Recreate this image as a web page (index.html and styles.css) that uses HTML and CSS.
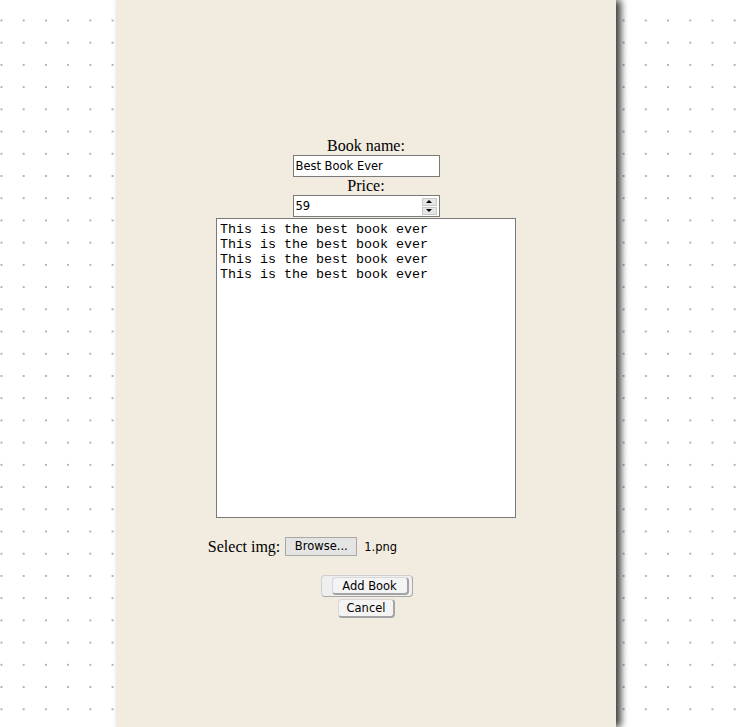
FILE: index.html
```html
<!DOCTYPE html>
<html>
<head>
<meta charset="utf-8">
<link rel="stylesheet" href="styles.css">
</head>
<body>
<div class="page">
  <form class="book-form">
    <label class="label">Book name:</label>
    <input class="field" type="text" value="Best Book Ever">
    <label class="label">Price:</label>
    <div class="field number">
      <input class="number-input" type="text" value="59">
      <div class="spinner">
        <span class="spin up"></span>
        <span class="spin down"></span>
      </div>
    </div>
    <textarea class="desc">This is the best book ever
This is the best book ever
This is the best book ever
This is the best book ever</textarea>
    <div class="file-row">
      <span class="file-label">Select img:</span>
      <span class="browse">Browse...</span>
      <span class="file-name">1.png</span>
    </div>
    <div class="actions">
      <span class="btn-frame"><span class="btn add">Add Book</span></span>
      <span class="btn cancel">Cancel</span>
    </div>
  </form>
</div>
</body>
</html>
```

FILE: styles.css
```css
html, body {
  margin: 0;
  padding: 0;
  height: 100%;
}
body {
  background-color: #ffffff;
  background-image: radial-gradient(circle at 1px 1px, #a3b6c0 0.9px, rgba(163,182,192,0) 1.4px);
  background-size: 22.22px 22.22px;
  background-position: 0.5px 19.5px;
  overflow: hidden;
}
.page {
  margin-left: 116px;
  width: 500px;
  height: 727px;
  background: #f2ebe0;
  box-shadow: 5px 0 7px rgba(0,0,0,0.75);
  box-sizing: border-box;
  padding-top: 137px;
}
.book-form {
  display: flex;
  flex-direction: column;
  align-items: center;
  margin: 0;
}
.label {
  font-family: "Liberation Serif", serif;
  font-size: 16px;
  line-height: 18px;
  color: #000;
}
.field {
  box-sizing: border-box;
  width: 147px;
  height: 22px;
  border: 1px solid #7a7a7a;
  background: #fff;
  font-family: "DejaVu Sans", sans-serif;
  font-size: 11.5px;
  padding: 0 2px;
  margin: 0;
  color: #000;
  outline: none;
}
.number {
  display: flex;
  align-items: center;
  padding: 0 2px 0 2px;
}
.number-input {
  flex: 1;
  min-width: 0;
  border: 0;
  outline: none;
  background: transparent;
  font-family: "DejaVu Sans", sans-serif;
  font-size: 11.5px;
  padding: 0;
  margin: 0;
  color: #000;
}
.spinner {
  display: flex;
  flex-direction: column;
  width: 15px;
  height: 17px;
  gap: 1px;
}
.spin {
  flex: 1;
  background: #e6e6e6;
  border: 1px solid #c8c8c8;
  box-sizing: border-box;
  display: flex;
  align-items: center;
  justify-content: center;
}
.up::after {
  content: "";
  border-left: 3px solid transparent;
  border-right: 3px solid transparent;
  border-bottom: 3px solid #000;
}
.down::after {
  content: "";
  border-left: 3px solid transparent;
  border-right: 3px solid transparent;
  border-top: 3px solid #000;
}
.desc {
  box-sizing: border-box;
  width: 300px;
  height: 300px;
  margin: 1px 0 0 0;
  border: 1px solid #7a7a7a;
  background: #fff;
  font-family: "Liberation Mono", monospace;
  font-size: 13.33px;
  line-height: 15px;
  padding: 3px 3px;
  resize: none;
  color: #000;
  outline: none;
}
.file-row {
  display: flex;
  align-items: center;
  margin-top: 19px;
  margin-left: -127px;
  height: 19px;
}
.file-label {
  font-family: "Liberation Serif", serif;
  font-size: 16px;
  line-height: 18px;
  margin-right: 5px;
}
.browse {
  box-sizing: border-box;
  height: 19px;
  width: 72px;
  border: 1px solid #a8a8a8;
  background: #e4e4e4;
  font-family: "DejaVu Sans", sans-serif;
  font-size: 11.5px;
  line-height: 17px;
  text-align: center;
  color: #000;
}
.file-name {
  font-family: "DejaVu Sans", sans-serif;
  font-size: 11.5px;
  margin-left: 7px;
}
.actions {
  display: flex;
  flex-direction: column;
  align-items: center;
  margin-top: 19px;
  margin-left: 1px;
}
.btn-frame {
  display: flex;
  justify-content: flex-end;
  box-sizing: border-box;
  width: 92px;
  height: 22px;
  padding: 1px 3px 2px 10px;
  border: 1px solid #cfcfcf;
  border-right-color: #a9a9a9;
  border-bottom-color: #a9a9a9;
  border-radius: 4px;
  background: #efefef;
}
.btn {
  box-sizing: border-box;
  display: flex;
  align-items: center;
  justify-content: center;
  font-family: "DejaVu Sans", sans-serif;
  font-size: 11.5px;
  color: #000;
  background: #f4f4f4;
  border: 1px solid #d8d8d8;
  border-right: 2px solid #a4a4a4;
  border-bottom: 2px solid #a4a4a4;
  border-radius: 4px;
}
.add {
  width: 79px;
  height: 18px;
}
.cancel {
  margin-top: 2px;
  width: 57px;
  height: 19px;
}
```
